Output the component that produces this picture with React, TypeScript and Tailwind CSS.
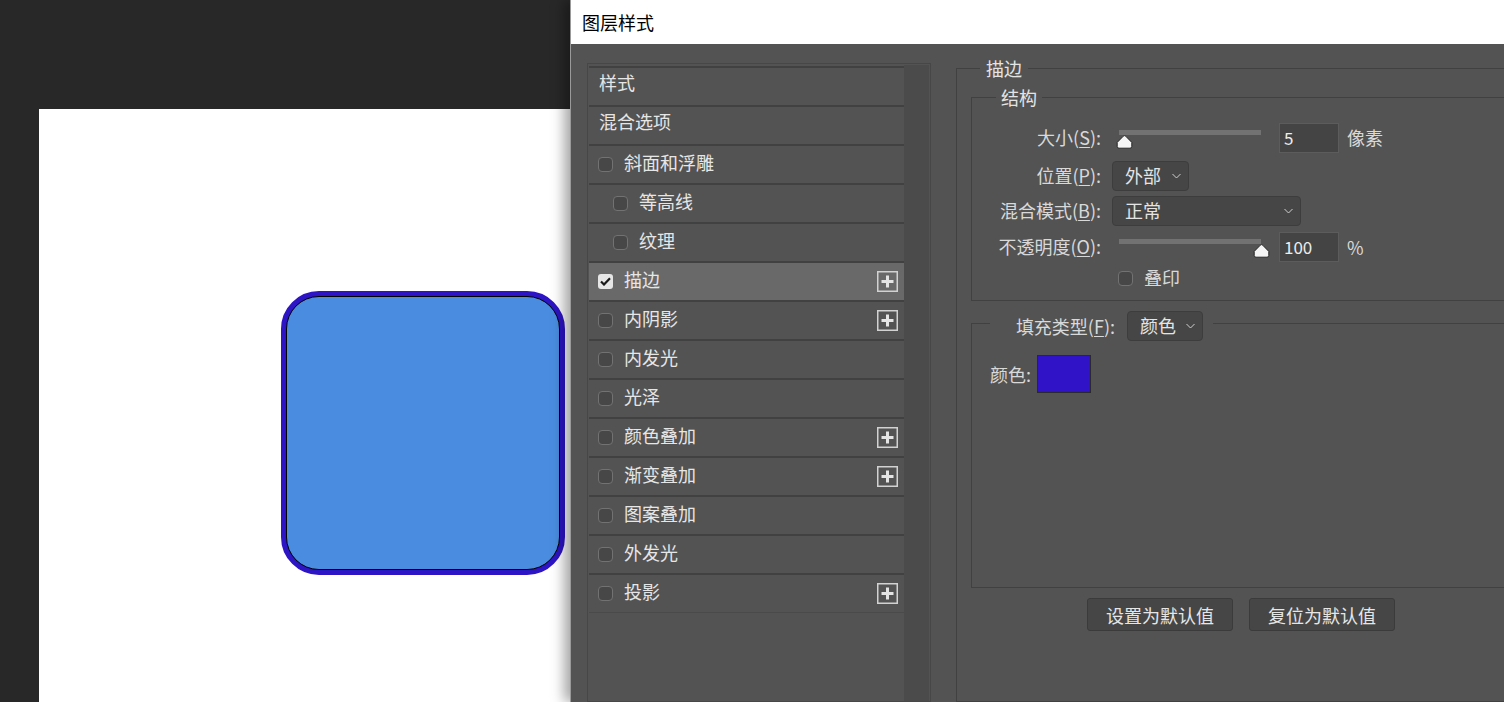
import React from 'react';

const font = "font-['Microsoft_YaHei','Noto_Sans_CJK_SC',sans-serif]";

type Item = { label: string; check?: boolean; checked?: boolean; indent?: boolean; plus?: boolean; active?: boolean };

const items: Item[] = [
  { label: '样式' },
  { label: '混合选项' },
  { label: '斜面和浮雕', check: true },
  { label: '等高线', check: true, indent: true },
  { label: '纹理', check: true, indent: true },
  { label: '描边', check: true, checked: true, plus: true, active: true },
  { label: '内阴影', check: true, plus: true },
  { label: '内发光', check: true },
  { label: '光泽', check: true },
  { label: '颜色叠加', check: true, plus: true },
  { label: '渐变叠加', check: true, plus: true },
  { label: '图案叠加', check: true },
  { label: '外发光', check: true },
  { label: '投影', check: true, plus: true },
];

const Checkbox: React.FC<{ checked?: boolean }> = ({ checked }) =>
  checked ? (
    <div className="w-[15px] h-[15px] rounded-[3px] bg-[#e6e6e6] flex items-center justify-center shrink-0">
      <svg width="11" height="9" viewBox="0 0 11 9">
        <path d="M1 4.5 L4 7.5 L10 1.2" fill="none" stroke="#1a1a1a" strokeWidth="2.2" />
      </svg>
    </div>
  ) : (
    <div className="w-[15px] h-[15px] rounded-[4px] border border-[#727272] bg-[#474747] shrink-0" />
  );

const PlusBox: React.FC = () => (
  <svg width="21" height="21" viewBox="0 0 21 21" className="shrink-0">
    <rect x="0.75" y="0.75" width="19.5" height="19.5" fill="none" stroke="#d2d2d2" strokeWidth="1.5" />
    <path d="M10.5 4.5 V16.5 M4.5 10.5 H16.5" stroke="#e4e4e4" strokeWidth="3" />
  </svg>
);

const Chevron: React.FC = () => (
  <svg width="9" height="6" viewBox="0 0 9 6">
    <path d="M0.5 1 L4.5 5 L8.5 1" fill="none" stroke="#cfcfcf" strokeWidth="1" />
  </svg>
);

const Thumb: React.FC = () => (
  <svg width="17" height="14" viewBox="0 0 17 14">
    <path d="M8.5 0.6 Q9.2 0.6 9.8 1.3 L15.8 7.4 L15.8 11.4 Q15.8 13.2 14 13.2 L3 13.2 Q1.2 13.2 1.2 11.4 L1.2 7.4 L7.2 1.3 Q7.8 0.6 8.5 0.6 Z" fill="#f4f4f4" stroke="#262626" strokeWidth="1" />
  </svg>
);

const Slider: React.FC<{ value: number }> = ({ value }) => (
  <div className="relative w-[160px] h-[30px]">
    <div className="absolute left-[7px] top-[7px] w-[142px] h-[5px] bg-[#727272]" />
    <div className="absolute top-[12px]" style={{ left: `${4 + (value / 100) * 137}px` }}>
      <Thumb />
    </div>
  </div>
);

const Select: React.FC<{ text: string; width: string }> = ({ text, width }) => (
  <div className={`${width} h-[30px] rounded-[4px] border border-[#3d3d3d] bg-[#464646] flex items-center justify-between pl-[12px] pr-[7px]`}>
    <span className="text-[#e4e4e4] mb-[2px]">{text}</span>
    <Chevron />
  </div>
);

const NumInput: React.FC<{ value: string }> = ({ value }) => (
  <div className="w-[60px] h-[30px] border border-[#5c5c5c] bg-[#444444] flex items-center pl-[4px] text-[#ececec] text-[17px]">
    {value}
  </div>
);

const Label: React.FC<{ text: string; k: string }> = ({ text, k }) => (
  <div className="w-[131px] text-right text-[#d9d9d9] pr-[2px] mb-[2px]">
    {text}(<span className="underline underline-offset-2">{k}</span>):
  </div>
);

const App: React.FC = () => {
  return (
    <div className={`w-[1504px] h-[702px] overflow-hidden flex bg-[#282828] ${font} text-[18px] leading-[22px]`}>
      {/* canvas */}
      <div className="w-[570px] shrink-0 pt-[109px] pl-[39px]">
        <div className="w-full h-[600px] bg-white pt-[182px] pl-[242px]">
          <div className="w-[284px] h-[284px] rounded-[38px] border-[5px] border-[#2d14c4] bg-[#2d14c4]">
            <div className="w-full h-full rounded-[33px] border border-black bg-[#4a8de0]" />
          </div>
        </div>
      </div>

      {/* dialog */}
      <div className="flex-1 flex flex-col bg-[#535353] shadow-[-6px_0_12px_rgba(0,0,0,0.35)] border-l border-[#9a9a9a] min-w-0">
        <div className="h-[44px] bg-white flex items-center pl-[11px] text-black shrink-0">图层样式</div>

        <div className="flex pt-[13px] pl-[16px] min-h-0 flex-1">
          {/* style list */}
          <div className="mt-[6px] w-[344px] shrink-0 border border-[#474747] p-[1px] pb-0 flex">
            <div className="w-[315px] flex flex-col pt-[1px]">
              {items.map((it) => (
                <div
                  key={it.label}
                  className={`h-[39px] border-t-2 border-[#414141] flex items-center pr-[6px] ${it.active ? 'bg-[#696969]' : 'bg-[#535353]'} ${it.indent ? 'pl-[24px]' : 'pl-[9px]'}`}
                >
                  {it.check && (
                    <div className="mr-[11px]">
                      <Checkbox checked={it.checked} />
                    </div>
                  )}
                  <span className={`flex-1 ${it.check ? 'mb-[6px]' : 'mb-[9px] pl-[1px]'} text-[#e6e6e6]`}>{it.label}</span>
                  {it.plus && <PlusBox />}
                </div>
              ))}
              <div className="h-[1px] bg-[#4a4a4a]" />
            </div>
            <div className="w-[25px] bg-[#4b4b4b]" />
          </div>

          {/* settings */}
          <fieldset className="ml-[25px] w-[570px] shrink-0 border border-[#414141] pl-[14px] pr-[14px] text-[#d9d9d9]">
            <legend className="ml-[9px] px-[6px] text-[#e4e4e4]">描边</legend>

            <fieldset className="mt-[7px] w-[540px] h-[215px] border border-[#414141]">
              <legend className="ml-[24px] px-[5px] text-[#e4e4e4]">结构</legend>

              <div className="flex items-center h-[30px] mt-[15px]">
                <Label text="大小" k="S" />
                <div className="ml-[9px]">
                  <Slider value={0} />
                </div>
                <div className="ml-[7px]">
                  <NumInput value="5" />
                </div>
                <span className="ml-[8px] mb-[2px]">像素</span>
              </div>

              <div className="flex items-center h-[30px] mt-[8px]">
                <Label text="位置" k="P" />
                <div className="ml-[9px]">
                  <Select text="外部" width="w-[77px]" />
                </div>
              </div>

              <div className="flex items-center h-[30px] mt-[5px]">
                <Label text="混合模式" k="B" />
                <div className="ml-[9px]">
                  <Select text="正常" width="w-[189px]" />
                </div>
              </div>

              <div className="flex items-center h-[30px] mt-[6px]">
                <Label text="不透明度" k="O" />
                <div className="ml-[9px]">
                  <Slider value={100} />
                </div>
                <div className="ml-[7px]">
                  <NumInput value="100" />
                </div>
                <span className="ml-[8px]">%</span>
              </div>

              <div className="flex items-center h-[24px] mt-[4px] pl-[146px]">
                <Checkbox />
                <span className="ml-[11px] mb-[2px]">叠印</span>
              </div>
            </fieldset>

            <fieldset className="mt-[4px] w-[540px] h-[283px] border border-[#414141]">
              <legend className="ml-[18px] pt-[6px] pr-[10px] flex items-center">
                <div className="w-[126px] text-right pr-[1px]">
                  填充类型(<span className="underline underline-offset-2">F</span>):
                </div>
                <div className="ml-[11px]">
                  <Select text="颜色" width="w-[76px]" />
                </div>
              </legend>
              <div className="flex items-center mt-[14px] pl-[18px]">
                <span>颜色:</span>
                <div className="ml-[6px] w-[54px] h-[38px] bg-[#3013c6] border border-[#2a2a2a]" />
              </div>
            </fieldset>

            <div className="w-[540px] flex justify-center gap-[16px] mt-[10px]">
              <div className="w-[146px] h-[33px] rounded-[3px] border border-[#3b3b3b] bg-[#464646] flex items-center justify-center text-[#e6e6e6]">
                设置为默认值
              </div>
              <div className="w-[146px] h-[33px] rounded-[3px] border border-[#3b3b3b] bg-[#464646] flex items-center justify-center text-[#e6e6e6]">
                复位为默认值
              </div>
            </div>
          </fieldset>
        </div>
      </div>
    </div>
  );
};

export default App;
